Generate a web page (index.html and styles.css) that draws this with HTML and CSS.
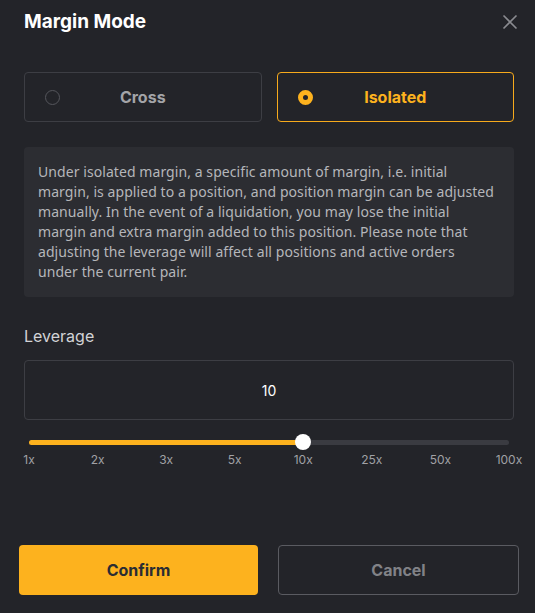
FILE: index.html
```html
<!DOCTYPE html>
<html lang="en">

<head>
    <meta charset="UTF-8">
    <title>Margin Mode</title>
    <link rel="stylesheet" href="styles.css">
</head>

<body>
    <div class="dialog">
        <div class="header">
            <h2 class="title">Margin Mode</h2>
            <span class="close">
                <svg width="16" height="16" viewBox="0 0 16 16">
                    <path d="M1.5 1.5 L14.5 14.5 M14.5 1.5 L1.5 14.5" stroke="#8a8b90" stroke-width="1.6" fill="none" />
                </svg>
            </span>
        </div>

        <div class="modes">
            <div class="mode">
                <span class="radio"></span>
                <span class="mode-label">Cross</span>
            </div>
            <div class="mode active">
                <span class="radio"></span>
                <span class="mode-label">Isolated</span>
            </div>
        </div>

        <div class="notice">
            Under isolated margin, a specific amount of margin, i.e. initial margin, is applied to a position, and position margin can be adjusted manually. In the event of a liquidation, you may lose the initial margin and extra margin added to this position. Please note that adjusting the leverage will affect all positions and active orders under the current pair.
        </div>

        <div class="leverage-label">Leverage</div>
        <div class="leverage-input">10</div>

        <div class="slider">
            <div class="track">
                <div class="fill" style="width: 57.14%"></div>
                <span class="thumb" style="left: 57.14%"></span>
            </div>
            <div class="marks">
                <span>1x</span>
                <span>2x</span>
                <span>3x</span>
                <span>5x</span>
                <span>10x</span>
                <span>25x</span>
                <span>50x</span>
                <span>100x</span>
            </div>
        </div>

        <div class="actions">
            <button class="btn confirm">Confirm</button>
            <button class="btn cancel">Cancel</button>
        </div>
    </div>
</body>

</html>
```

FILE: styles.css
```css
* {
    margin: 0;
    padding: 0;
    box-sizing: border-box;
}

html,
body {
    background: #232429;
    font-family: Inter, "Noto Sans", "Liberation Sans", sans-serif;
}

.dialog {
    width: 535px;
    height: 613px;
    padding: 0 21px 0 24px;
    display: flex;
    flex-direction: column;
}

.header {
    display: flex;
    justify-content: space-between;
    align-items: center;
    height: 42px;
    padding-top: 1px;
}

.title {
    font-size: 19px;
    font-weight: 700;
    color: #fff;
}

.close {
    display: flex;
    margin-right: -4px;
}

.modes {
    display: flex;
    gap: 15px;
    margin-top: 30px;
}

.mode {
    flex: 1;
    height: 50px;
    border: 1px solid #3d3e44;
    border-radius: 4px;
    display: flex;
    align-items: center;
    position: relative;
}

.mode.active {
    border-color: #f7aa1c;
}

.radio {
    position: absolute;
    left: 20px;
    top: 17px;
    width: 15px;
    height: 15px;
    border: 1px solid #55565c;
    border-radius: 50%;
}

.mode.active .radio {
    border: 5px solid #fdb21e;
    background: #232429;
}

.mode-label {
    flex: 1;
    text-align: center;
    font-size: 16px;
    font-weight: 700;
    color: #a3a4a8;
}

.mode.active .mode-label {
    color: #fdb21e;
}

.notice {
    margin-top: 25px;
    background: #2c2d32;
    border-radius: 4px;
    padding: 15px 17px 15px 14px;
    font-family: "Noto Sans", Inter, sans-serif;
    font-size: 14px;
    letter-spacing: 0.07px;
    line-height: 20px;
    color: #b5b6ba;
}

.leverage-label {
    margin-top: 28px;
    font-size: 16px;
    color: #d2d3d6;
    line-height: 22px;
}

.leverage-input {
    margin-top: 13px;
    height: 60px;
    border: 1px solid #3d3e44;
    border-radius: 4px;
    display: flex;
    align-items: center;
    justify-content: center;
    font-size: 14px;
    color: #fff;
}

.slider {
    margin-top: 20px;
    padding: 0 5px;
}

.track {
    position: relative;
    height: 5px;
    border-radius: 3px;
    background: #3a3b41;
}

.fill {
    height: 100%;
    border-radius: 3px;
    background: #fdb21e;
}

.thumb {
    position: absolute;
    top: -6px;
    width: 16px;
    height: 16px;
    margin-left: -8px;
    border-radius: 50%;
    background: #fff;
}

.marks {
    display: flex;
    justify-content: space-between;
    margin: 7px -17px 0;
    font-size: 12px;
    color: #a0a1a5;
}

.marks span {
    width: 34px;
    text-align: center;
}

.actions {
    display: flex;
    gap: 20px;
    margin: auto -5px 18px -5px;
}

.btn {
    flex: 1;
    height: 50px;
    border-radius: 4px;
    font-family: inherit;
    font-size: 16px;
    font-weight: 700;
}

.confirm {
    background: #fdb21e;
    border: none;
    color: #2a2c33;
}

.cancel {
    background: transparent;
    border: 1px solid #5a5b61;
    color: #818287;
}
```
